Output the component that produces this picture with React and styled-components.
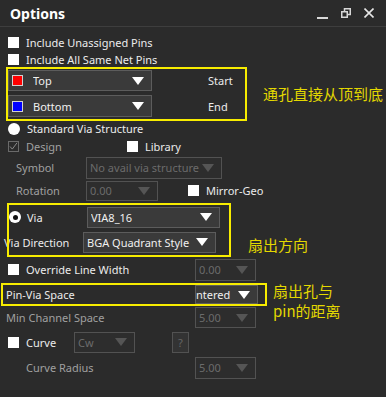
import React from 'react';
import styled, { createGlobalStyle, css } from 'styled-components';

const GlobalStyle = createGlobalStyle`
  html, body {
    margin: 0;
    padding: 0;
    background: #2b2b2b;
  }
  body {
    font-family: 'Noto Sans', 'Open Sans', sans-serif;
    font-size: 11px;
    color: #e6e6e6;
  }
`;

const Panel = styled.div`
  width: 386px;
  height: 397px;
  background: #2b2b2b;
  overflow: hidden;
  display: flex;
  flex-direction: column;
`;

const TitleBar = styled.div`
  height: 26px;
  border-bottom: 1px solid #3e3e3e;
  display: flex;
  align-items: center;
  padding-left: 10px;

  h1 {
    margin: 0;
    font-size: 14px;
    font-weight: 700;
    color: #ffffff;
    flex: 1;
  }
`;

const WinButtons = styled.div`
  display: flex;
  align-items: center;
  gap: 13px;
  padding-right: 12px;
  color: #e6e6e6;
`;

const Row = styled.div`
  height: ${({ h }) => h}px;
  margin-top: ${({ mt }) => mt || 0}px;
  padding-left: ${({ pl }) => (pl === undefined ? 8 : pl)}px;
  display: flex;
  align-items: center;
  flex-shrink: 0;
`;

const Box = styled.div`
  width: 11px;
  height: 11px;
  flex-shrink: 0;
  box-sizing: border-box;
  background: #ffffff;
  ${({ checked }) =>
    checked &&
    css`
      background: transparent;
      border: 1px solid #6a6a6a;
      display: flex;
      align-items: center;
      justify-content: center;
    `}
`;

const Radio = styled.div`
  width: 12px;
  height: 12px;
  border-radius: 50%;
  background: #ffffff;
  flex-shrink: 0;
  display: flex;
  align-items: center;
  justify-content: center;

  &::after {
    content: '';
    display: ${({ dot }) => (dot ? 'block' : 'none')};
    width: 5px;
    height: 5px;
    border-radius: 50%;
    background: #111;
  }
`;

const Label = styled.span`
  margin-left: ${({ ml }) => ml || 0}px;
  color: ${({ dim }) => (dim ? '#a0a0a0' : '#ececec')};
  white-space: nowrap;
  width: ${({ w }) => (w ? `${w}px` : 'auto')};
  flex-shrink: 0;
`;

const Select = styled.div`
  box-sizing: border-box;
  width: ${({ w }) => w}px;
  height: ${({ h }) => h || 21}px;
  margin-left: ${({ ml }) => ml || 0}px;
  flex-shrink: 0;
  border: 1px solid ${({ disabled }) => (disabled ? '#525252' : '#5c5c5c')};
  background: ${({ disabled }) => (disabled ? '#2d2d2d' : '#3a3a3a')};
  color: ${({ disabled }) => (disabled ? '#6b6b6b' : '#f0f0f0')};
  display: flex;
  align-items: center;
  padding: 0 7px 0 ${({ pad }) => (pad === undefined ? 3 : pad)}px;
  overflow: hidden;

  span {
    flex: 1;
    white-space: nowrap;
    overflow: hidden;
  }
`;

const Arrow = styled.i`
  width: 0;
  height: 0;
  flex-shrink: 0;
  border-left: 6px solid transparent;
  border-right: 6px solid transparent;
  border-top: 8px solid ${({ disabled }) => (disabled ? '#555555' : '#ffffff')};
`;

const Swatch = styled.i`
  width: 9px;
  height: 9px;
  border: 1px solid #d0d0d0;
  background: ${({ c }) => c};
  margin: 0 10px 0 3px;
  flex-shrink: 0;
`;

const Group = styled.div`
  position: relative;
  width: ${({ w }) => w}px;
  margin-left: ${({ ml }) => ml || 0}px;
  padding: ${({ pad }) => pad};
  box-sizing: border-box;
  flex-shrink: 0;
  display: flex;
  flex-direction: column;
  gap: ${({ gap }) => gap || 0}px;

  &::after {
    content: '';
    position: absolute;
    inset: 0;
    border: 2px solid #f7ec00;
    pointer-events: none;
  }
`;

const GroupLine = styled.div`
  display: flex;
  align-items: center;
  height: ${({ h }) => h}px;
`;

const Note = styled.div`
  color: #e3d800;
  font-family: 'Noto Sans CJK SC', 'Noto Sans', sans-serif;
  font-size: 15px;
  line-height: 20px;
  margin-left: ${({ ml }) => ml}px;
  margin-top: ${({ mt }) => mt || 0}px;
  align-self: ${({ self }) => self || 'center'};
  white-space: nowrap;
`;

const HelpButton = styled.div`
  box-sizing: border-box;
  width: 17px;
  height: 21px;
  margin-left: 37px;
  border: 1px solid #525252;
  background: #333333;
  color: #666666;
  font-size: 11px;
  display: flex;
  align-items: center;
  justify-content: center;
`;

const Drop = ({ w, h, ml, disabled, children, pad, swatch }) => (
  <Select w={w} h={h} ml={ml} disabled={disabled} pad={pad}>
    {swatch && <Swatch c={swatch} />}
    <span>{children}</span>
    <Arrow disabled={disabled} />
  </Select>
);

export default function App() {
  return (
    <Panel>
      <GlobalStyle />
      <TitleBar>
        <h1>Options</h1>
        <WinButtons>
          <svg width="11" height="12" viewBox="0 0 11 12">
            <rect x="0" y="10" width="11" height="2" fill="#d8d8d8" />
          </svg>
          <svg width="10" height="10" viewBox="0 0 10 10" fill="none" stroke="#d8d8d8" strokeWidth="1.5">
            <rect x="0.75" y="3.75" width="5.5" height="5.5" />
            <path d="M3.5 3.5V0.75h5.75v5.75H6.5" />
          </svg>
          <svg width="10" height="10" viewBox="0 0 10 10" stroke="#e6e6e6" strokeWidth="1.6">
            <path d="M0.5 0.5l9 9M9.5 0.5l-9 9" />
          </svg>
        </WinButtons>
      </TitleBar>

      <Row h={17} mt={7}>
        <Box />
        <Label ml={7}>Include Unassigned Pins</Label>
      </Row>
      <Row h={16}>
        <Box />
        <Label ml={7}>Include All Same Net Pins</Label>
      </Row>

      <Row h={54} pl={6}>
        <Group w={241} pad="3px 2px 4px 2px" gap={4}>
          <GroupLine h={21}>
            <Drop w={144} swatch="#ff0000" pad={0}>Top</Drop>
            <Label ml={56}>Start</Label>
          </GroupLine>
          <GroupLine h={22}>
            <Drop w={144} h={22} swatch="#0000ff" pad={0}>Bottom</Drop>
            <Label ml={56}>End</Label>
          </GroupLine>
        </Group>
        <Note ml={16}>通孔直接从顶到底</Note>
      </Row>

      <Row h={15}>
        <Radio />
        <Label ml={7}>Standard Via Structure</Label>
      </Row>
      <Row h={20}>
        <Box checked>
          <svg width="9" height="9" viewBox="0 0 9 9" fill="none" stroke="#8a8a8a" strokeWidth="1">
            <path d="M1 4.5l2.3 2.6L8 0.8" />
          </svg>
        </Box>
        <Label ml={7} dim>Design</Label>
        <Box style={{ marginLeft: 65 }} />
        <Label ml={7}>Library</Label>
      </Row>
      <Row h={23} pl={16}>
        <Label w={70} dim>Symbol</Label>
        <Drop w={136} h={22} disabled>No avail via structure</Drop>
      </Row>
      <Row h={23} pl={16}>
        <Label w={70} dim>Rotation</Label>
        <Drop w={72} h={20} disabled>0.00</Drop>
        <Box style={{ marginLeft: 30 }} />
        <Label ml={7}>Mirror-Geo</Label>
      </Row>

      <Row h={55} pl={7}>
        <Group w={224} pad="4px 0 4px 0" gap={4}>
          <GroupLine h={21}>
            <Radio dot style={{ marginLeft: 2 }} />
            <Label ml={6} w={60}>Via</Label>
            <Drop w={133}>VIA8_16</Drop>
          </GroupLine>
          <GroupLine h={21}>
            <Label w={79} style={{ marginLeft: -3 }}>Via Direction</Label>
            <Drop w={133}>BGA Quadrant Style</Drop>
          </GroupLine>
        </Group>
        <Note ml={17} self="flex-end" style={{ marginBottom: 2 }}>扇出方向</Note>
      </Row>

      <Row h={25}>
        <Box />
        <Label ml={7} w={169}>Override Line Width</Label>
        <Drop w={61} h={22} disabled>0.00</Drop>
      </Row>

      <Row h={23} pl={1} mt={1}>
        <Group w={266} pad="0 0 0 5px">
          <GroupLine h={23}>
            <Label w={189}>Pin-Via Space</Label>
            <Drop w={63} h={19} pad={0}>ntered</Drop>
          </GroupLine>
        </Group>
        <Note ml={6} self="flex-start" mt={-2}>
          扇出孔与
          <br />
          pin的距离
        </Note>
      </Row>

      <Row h={23} pl={6}>
        <Label w={189} dim>Min Channel Space</Label>
        <Drop w={61} h={21} disabled>5.00</Drop>
      </Row>

      <Row h={26}>
        <Box />
        <Label ml={7} w={48}>Curve</Label>
        <Drop w={61} h={21} disabled>Cw</Drop>
        <HelpButton>?</HelpButton>
      </Row>

      <Row h={25} pl={26}>
        <Label w={169} dim>Curve Radius</Label>
        <Drop w={61} h={22} disabled>5.00</Drop>
      </Row>
    </Panel>
  );
}
